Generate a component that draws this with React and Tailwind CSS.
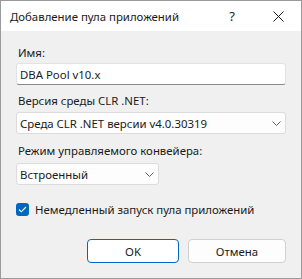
import { useState } from "react";

function Chevron() {
  return (
    <svg width="9" height="5" viewBox="0 0 9 5" fill="none" className="shrink-0">
      <path d="M0.5 0.5L4.5 4.5L8.5 0.5" stroke="#606060" strokeWidth="1" />
    </svg>
  );
}

function Combo({ value, className }) {
  return (
    <div
      className={`flex h-[22px] items-center justify-between rounded-[3px] border border-[#dcdcdc] bg-[#fdfdfd] pl-[3px] pr-[4px] ${className}`}
    >
      <span>{value}</span>
      <Chevron />
    </div>
  );
}

export default function App() {
  const [checked, setChecked] = useState(true);

  return (
    <div
      className="flex h-[279px] w-[302px] flex-col border border-[#9a9a9a] bg-[#f0f0f0] text-[11.4px] leading-[15px] text-[#1a1a1a]"
      style={{ fontFamily: "'Noto Sans', 'Segoe UI', sans-serif" }}
    >
      {/* заголовок */}
      <div className="flex h-[30px] items-center bg-white pl-[9px] text-[11.4px]">
        <span className="flex-1">Добавление пула приложений</span>
        <span className="w-[46px] text-center text-[13px]">?</span>
        <span className="flex w-[46px] items-center justify-center">
          <svg width="11" height="11" viewBox="0 0 11 11">
            <path d="M0.5 0.5L10.5 10.5M10.5 0.5L0.5 10.5" stroke="#1a1a1a" strokeWidth="1" />
          </svg>
        </span>
      </div>

      <div className="flex flex-1 flex-col px-[15px] pt-[14px]">
        <label className="pl-[2px]">Имя:</label>
        <div className="mt-[3px] flex h-[22px] items-center rounded-[3px] border border-[#e2e2e2] border-b-[#8a8a8a] bg-white pl-[3px]">
          DBA Pool v10.x
        </div>

        <label className="mt-[8px] pl-[2px]">Версия среды CLR .NET:</label>
        <Combo className="mt-[4px]" value="Среда CLR .NET версии v4.0.30319" />

        <label className="mt-[9px] pl-[2px]">Режим управляемого конвейера:</label>
        <Combo className="mt-[5px] w-[143px]" value="Встроенный" />

        <label className="mt-[17px] flex items-center gap-[6px]" onClick={() => setChecked(!checked)}>
          <span className="flex h-[13px] w-[13px] items-center justify-center rounded-[3px] bg-[#0067c0]">
            {checked && (
              <svg width="9" height="7" viewBox="0 0 9 7" fill="none">
                <path d="M1 3.5L3.3 5.8L8 1" stroke="white" strokeWidth="1.1" />
              </svg>
            )}
          </span>
          <span>Немедленный запуск пула приложений</span>
        </label>

        <div className="mt-[22px] flex justify-end gap-[9px]">
          <button className="h-[24px] w-[92px] rounded-[4px] border border-[#0067c0] bg-white">OK</button>
          <button className="h-[24px] w-[98px] rounded-[4px] border border-[#d0d0d0] bg-[#fdfdfd]">Отмена</button>
        </div>
      </div>
    </div>
  );
}
